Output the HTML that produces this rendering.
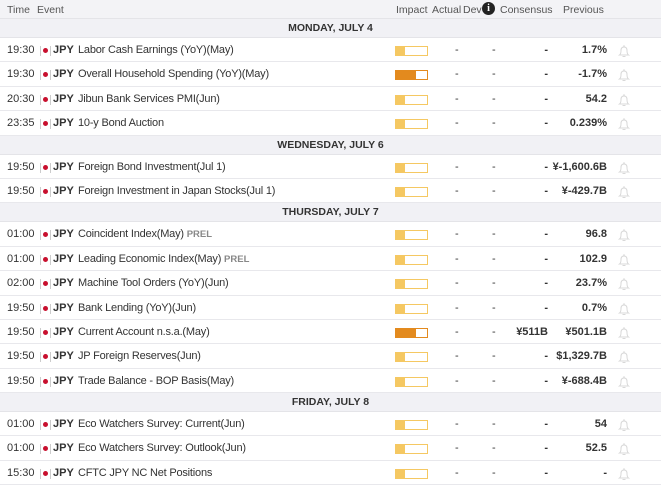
<!DOCTYPE html>
<html><head><meta charset="utf-8"><style>
*{margin:0;padding:0;box-sizing:border-box}
body{width:661px;height:485px;overflow:hidden;background:#fff;font-family:"Liberation Sans",sans-serif;font-size:11px;color:#333}
.hd{height:19px;background:#f3f3f6;position:relative;border-bottom:1px solid #e4e4e8;color:#555;font-size:10.5px}
.hd span{position:absolute;top:4px}
.sec{height:19px;background:#f1f1f5;text-align:center;font-weight:bold;font-size:10.5px;line-height:19px;color:#333;border-bottom:1px solid #e4e4e8}
.r{height:24.4px;position:relative;border-bottom:1px solid #e8e8ec;line-height:25px}
.r span{position:absolute;top:0}
.t{left:7px}
.fl{left:40px;top:8px!important;width:11px;height:10px;border-left:1px solid #ccc;border-right:1px solid #ccc}
.fl::after{content:"";position:absolute;left:2px;top:2px;width:5px;height:5px;border-radius:50%;background:#c8102e}
.c{left:53px;font-weight:bold}
.e{left:78px;letter-spacing:-0.2px}
.p{color:#888;font-weight:bold;font-size:9.5px;letter-spacing:0}
.bar{position:absolute;left:395px;top:8px;width:33px;height:10px;border:1px solid #f5c862;background:#fff}
.bar::before{content:"";position:absolute;left:0;top:0;bottom:0;width:9px;background:#f5c862}
.bar.m{border-color:#e38a1e}
.bar.m::before{background:#e38a1e;width:20px}
.a{left:455px}.d{left:492px}
.cs{right:113px;font-weight:bold}
.pv{right:54px;font-weight:bold}
.bell{position:absolute;left:618px;top:6px}
</style></head><body>
<div class="hd"><span style="left:7px">Time</span><span style="left:37px">Event</span><span style="left:396px">Impact</span><span style="left:432px">Actual</span><span style="left:463px">Dev</span><span style="left:482px;top:2px;width:13px;height:13px;border-radius:50%;background:#222;color:#fff;font-weight:bold;font-size:10px;text-align:center;line-height:13px;font-family:'Liberation Serif',serif">i</span><span style="left:500px">Consensus</span><span style="left:563px">Previous</span></div>
<div class="sec">MONDAY, JULY 4</div>
<div id="rows"></div>
<script>
var B='<svg class="bell" width="12" height="14" viewBox="0 0 12 14"><path d="M1.5 11 Q3 10 3 6.5 Q3 3 6 3 Q9 3 9 6.5 Q9 10 10.5 11 Z M4.5 12.5 H7.5" fill="none" stroke="#d8d8d8" stroke-width="1"/><circle cx="6" cy="2" r="0.8" fill="#d8d8d8"/></svg>';
function row(t,e,m,c,p,prel){return '<div class="r"><span class="t">'+t+'</span><span class="fl"></span><span class="c">JPY</span><span class="e">'+e+(prel?' <span class="p" style="position:static">PREL</span>':'')+'</span><div class="bar'+(m?' m':'')+'"></div><span class="a">-</span><span class="d">-</span><span class="cs">'+c+'</span><span class="pv">'+p+'</span>'+B+'</div>'}
function sec(s){return '<div class="sec">'+s+'</div>'}
var h='';
h+=row('19:30','Labor Cash Earnings (YoY)(May)',0,'-','1.7%');
h+=row('19:30','Overall Household Spending (YoY)(May)',1,'-','-1.7%');
h+=row('20:30','Jibun Bank Services PMI(Jun)',0,'-','54.2');
h+=row('23:35','10-y Bond Auction',0,'-','0.239%');
h+=sec('WEDNESDAY, JULY 6');
h+=row('19:50','Foreign Bond Investment(Jul 1)',0,'-','¥-1,600.6B');
h+=row('19:50','Foreign Investment in Japan Stocks(Jul 1)',0,'-','¥-429.7B');
h+=sec('THURSDAY, JULY 7');
h+=row('01:00','Coincident Index(May)',0,'-','96.8',1);
h+=row('01:00','Leading Economic Index(May)',0,'-','102.9',1);
h+=row('02:00','Machine Tool Orders (YoY)(Jun)',0,'-','23.7%');
h+=row('19:50','Bank Lending (YoY)(Jun)',0,'-','0.7%');
h+=row('19:50','Current Account n.s.a.(May)',1,'¥511B','¥501.1B');
h+=row('19:50','JP Foreign Reserves(Jun)',0,'-','$1,329.7B');
h+=row('19:50','Trade Balance - BOP Basis(May)',0,'-','¥-688.4B');
h+=sec('FRIDAY, JULY 8');
h+=row('01:00','Eco Watchers Survey: Current(Jun)',0,'-','54');
h+=row('01:00','Eco Watchers Survey: Outlook(Jun)',0,'-','52.5');
h+=row('15:30','CFTC JPY NC Net Positions',0,'-','-');
document.getElementById('rows').innerHTML=h;
</script>
</body></html>
